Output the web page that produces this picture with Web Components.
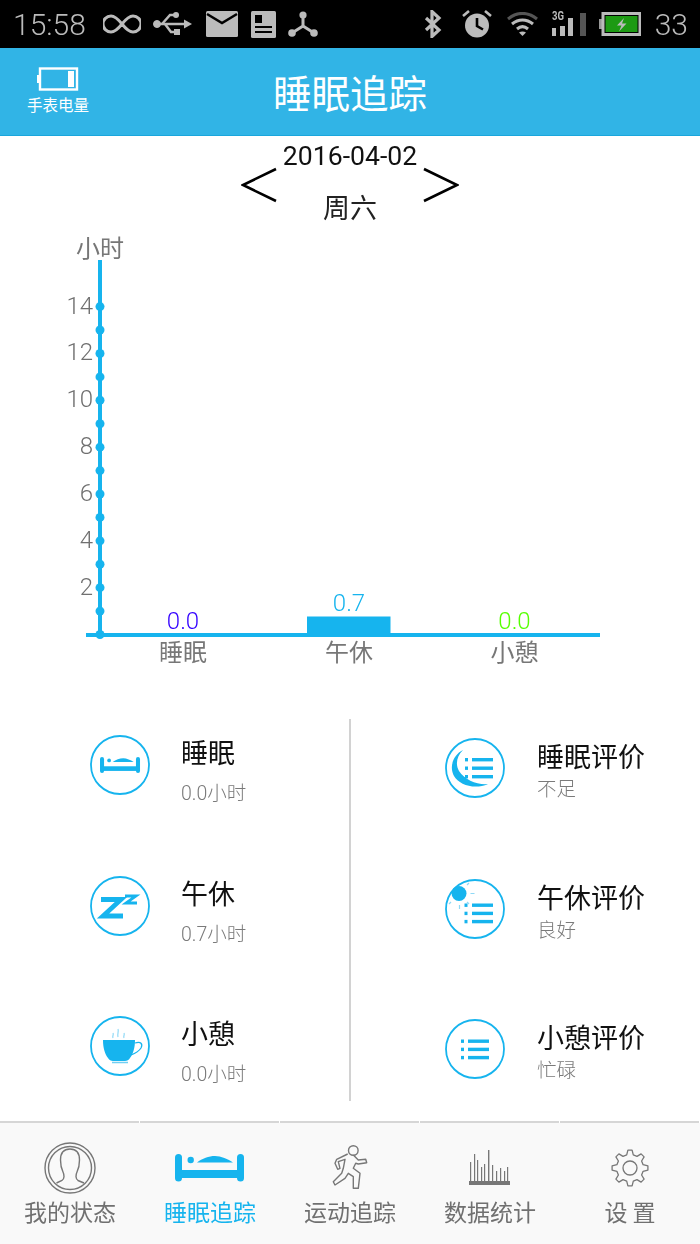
<!DOCTYPE html>
<html>
<head>
<meta charset="utf-8">
<title>睡眠追踪</title>
<style>
html, body { margin: 0; padding: 0; background: #fff; }
body { width: 700px; height: 1244px; overflow: hidden; font-family: Roboto, "Noto Sans CJK SC", sans-serif; }
</style>
</head>
<body>
<sleep-page></sleep-page>

<script>
const BLUE = '#16b4ee'
const GREY = '#777'

// every icon is viewBox-sized in reference pixels, so width/height come from here
const ICONS = {
  infinity: [38, 24, `<path d="M19 12c-4-5-7-8-11-8a8 8 0 0 0 0 16c4 0 7-3 11-8s7-8 11-8a8 8 0 0 1 0 16c-4 0-7-3-11-8z" fill="none" stroke="#bbb" stroke-width="3"/>`],
  usb: [40, 26, `<g fill="#bbb" stroke="#bbb"><circle cx="4" cy="13" r="3.5"/><path d="M4 13h30" stroke-width="2.5"/><path d="M31 8.5l8 4.5-8 4.5z" stroke="none"/><circle cx="23" cy="4" r="3" stroke="none"/><rect x="21" y="18" width="6" height="6" stroke="none"/><path d="M9 13l8-9h5M12 13l6 8h4" fill="none" stroke-width="2.5"/></g>`],
  mail: [32, 26, `<rect x="0" y="0" width="32" height="26" rx="1.5" fill="#bbb"/><path d="M1 3l15 9 15-9" fill="none" stroke="#000" stroke-width="2.6"/>`],
  doc: [25, 27, `<rect x="0" y="0" width="25" height="27" rx="1.5" fill="#bbb"/><rect x="4" y="4" width="7" height="8" fill="#000"/><rect x="4" y="15" width="17" height="2" fill="#000"/><rect x="4" y="20" width="17" height="2" fill="#000"/>`],
  nodes: [30, 26, `<g fill="#bbb"><circle cx="15" cy="4" r="3.6"/><circle cx="4" cy="22" r="3.8"/><circle cx="26" cy="22" r="3.8"/></g><path d="M15 4v11M15 15L4 22M15 15l11 7" stroke="#bbb" stroke-width="3" fill="none"/>`],
  bluetooth: [20, 28, `<path d="M3 8l13 12-7 6.5V1.5L16 8 3 20" fill="none" stroke="#bbb" stroke-width="3.2"/>`],
  alarm: [30, 28, `<circle cx="15" cy="15.5" r="12" fill="#bbb"/><path d="M15 8v8l6 3.5" fill="none" stroke="#000" stroke-width="2.6"/><path d="M1 6l6-5M29 6l-6-5" stroke="#bbb" stroke-width="2.6" fill="none"/>`],
  wifi: [31, 24, `<g fill="none" stroke-width="3"><path d="M1 7c9-7.5 20-7.5 29 0" stroke="#555"/><path d="M5 12c6.5-5.5 14.5-5.5 21 0" stroke="#bbb"/><path d="M10 17c3.5-3 7.5-3 11 0" stroke="#bbb"/></g><path d="M12 20.5c2-1.5 5-1.5 7 0l-3.5 3.5z" fill="#bbb"/>`],
  signal: [34, 28, `<g fill="#bbb"><rect x="0" y="18" width="4" height="8"/><rect x="8" y="16" width="5" height="10"/><rect x="16" y="8" width="5" height="18"/></g><rect x="28" y="3" width="6" height="23" fill="#555"/><text x="0" y="10" font-family="Roboto, sans-serif" font-size="12" font-weight="700" fill="#bbb" textLength="12" lengthAdjust="spacingAndGlyphs">3G</text>`],
  battery: [42, 24, `<rect x="0" y="7" width="3" height="10" fill="#999"/><rect x="4" y="1.5" width="37" height="21" fill="none" stroke="#bbb" stroke-width="3"/><rect x="6.5" y="4" width="32" height="16" fill="#1d9a13"/><path d="M25 6l-7 7.5h4.5l-2.5 6 7.5-8h-4.5z" fill="#bbb"/>`],
  watch: [42, 24, `<rect x="0" y="8" width="2.5" height="8" fill="#fff"/><rect x="3" y="1.5" width="37" height="21" fill="none" stroke="#fff" stroke-width="2.4"/><rect x="31" y="4" width="6" height="16" fill="#fff"/>`],
  prev: [38, 37, `<path d="M35 2L2 18l33 16" fill="none" stroke="#000" stroke-width="2.6"/>`],
  next: [38, 37, `<path d="M3 2l33 16-33 16" fill="none" stroke="#000" stroke-width="2.6"/>`],
  'c-bed': [60, 60, ring() + bed(10, 22, 0.58)],
  'c-zz': [60, 60, ring() + `<path d="M11 23.5h20L13 40h20" fill="none" stroke="${BLUE}" stroke-width="4.8"/><path d="M35 20h11L36 27h11" fill="none" stroke="${BLUE}" stroke-width="2.8"/>`],
  'c-cup': [60, 60, ring() + `<path d="M13 24h32c0 8-2 14-5 18-1 2-3 3-5 3H23c-2 0-4-1-5-3-3-4-5-10-5-18z" fill="${BLUE}"/><path d="M45 27c6-2 8 1 6 5-2 3-5 5-10 7" fill="none" stroke="${BLUE}" stroke-width="1.3"/><path d="M22 46.5h16" stroke="#6fcff3" stroke-width="1.5"/><path d="M23 22c-1-2 1-3 0-5M28 21c-1-3 1-5 0-8M34 22c-1-2 1-3 0-5" fill="none" stroke="#8fd9f6" stroke-width="1.2"/>`],
  'c-moon': [60, 60, ring() + `<path d="M18 12C8 17 4 29 9 38c5 9 21 14 34 8-11 1-23-4-29-13-4-7-2-15 4-21z" fill="${BLUE}"/>` + list(20, 27, 20, 8.5)],
  'c-sun': [60, 60, ring() + `<circle cx="14" cy="14.5" r="7.5" fill="${BLUE}"/><path d="M25.5 14.5h4M22 6l2-2M22 23l2 2M14.5 26v4M6 23l-2 2" stroke="#8fd9f6" stroke-width="1.2" fill="none"/>` + list(19.5, 27, 24.5, 8.2)],
  'c-list': [60, 60, ring() + list(16, 23, 20.5, 8.2)],
  person: [54, 54, `<g fill="none" stroke="${GREY}" stroke-width="1.4"><circle cx="27" cy="27" r="25"/><circle cx="27" cy="27" r="21.5"/><path d="M13.5 42L19 39.5C21.5 38 21.5 34 20 31 18 27 17.5 24 17.5 19 17.5 12 21 8 27 8 33 8 36.5 12 36.5 19 36.5 24 36 27 34 31 32.5 34 32.5 38 35 39.5L41 42"/></g>`],
  bed: [70, 28, bed(0, 0, 1, BLUE)],
  runner: [36, 46, `<g fill="none" stroke="${GREY}" stroke-width="1.4" stroke-linejoin="round"><circle cx="21.3" cy="5.5" r="4.8"/><path d="M15.7 9L4.7 14.3 3 18.3 5.7 24.3 8 23.3 6.3 16.7 13 14.3 11.3 23.3 9.7 28.3 1.3 36.7 3 40 13 33.3 16.3 28.3 21.3 31.7 21.3 43.3 26.3 43.3 28 28.3 21.3 23.3 23.7 18.3 26.3 19 34.7 17.7 33.7 14.3 26.3 15 21.3 10"/></g>`],
  stats: [42, 36, `<g fill="${GREY}"><rect x="0" y="31" width="41" height="4"/><rect x="1" y="12" width="1.2" height="20"/><rect x="5" y="4" width="1.2" height="28"/><rect x="8" y="10" width="1.2" height="22"/><rect x="12" y="17" width="1.2" height="15"/><rect x="15" y="14" width="1.2" height="18"/><rect x="19" y="0" width="1.4" height="32"/><rect x="23" y="15" width="1.2" height="17"/><rect x="27" y="21" width="1.2" height="11"/><rect x="31" y="18" width="1.2" height="14"/><rect x="35" y="21" width="1.2" height="11"/><rect x="38" y="17" width="1.2" height="15"/></g>`],
  gear: [38, 38, `<g fill="none" stroke="${GREY}" stroke-width="1.3" stroke-linejoin="round"><circle cx="19" cy="19" r="7"/><path d="${gearPath()}"/></g>`]
}

function ring () {
  return `<circle cx="30" cy="30" r="29" fill="none" stroke="${BLUE}" stroke-width="1.8"/>`
}

function bed (x, y, s, c = BLUE) {
  return `<g transform="translate(${x} ${y}) scale(${s})" fill="${c}"><rect x="0" y="0" width="7" height="27.5" rx="3.5"/><rect x="62" y="0" width="7" height="27.5" rx="3.5"/><rect x="2" y="16" width="65" height="8"/><circle cx="15.7" cy="6" r="3.2"/><path d="M22 8.5c5-4 12-6.5 18-6.5s13 3 18 6.5z"/></g>`
}

function list (bx, lx, top, step) {
  let out = ''
  for (let i = 0; i < 3; i++) {
    const y = top + i * step
    out += `<rect x="${bx}" y="${y}" width="3" height="3.4" fill="${BLUE}"/><rect x="${lx}" y="${y}" width="21" height="3.4" fill="${BLUE}"/>`
  }
  return out
}

function gearPath () {
  let d = ''
  const teeth = 8
  for (let i = 0; i < teeth; i++) {
    const a = (i / teeth) * Math.PI * 2
    const w = Math.PI / teeth
    const pts = [[13.5, a - w * 0.62], [18, a - w * 0.3], [18, a + w * 0.3], [13.5, a + w * 0.62]]
    pts.forEach((p, j) => {
      const px = (19 + p[0] * Math.sin(p[1])).toFixed(1)
      const py = (19 - p[0] * Math.cos(p[1])).toFixed(1)
      d += `${i === 0 && j === 0 ? 'M' : 'L'}${px} ${py}`
    })
  }
  return d + 'Z'
}

class AppIcon extends HTMLElement {
  connectedCallback () {
    const [w, h, body] = ICONS[this.getAttribute('name')]
    this.attachShadow({ mode: 'open' }).innerHTML = `
      <style>:host { display: block; flex: none; width: ${w}px; height: ${h}px; } svg { display: block; }</style>
      <svg width="${w}" height="${h}" viewBox="0 0 ${w} ${h}">${body}</svg>`
  }
}

class StatusBar extends HTMLElement {
  connectedCallback () {
    this.attachShadow({ mode: 'open' }).innerHTML = `
      <style>
        :host { display: flex; align-items: center; height: 48px; background: #000; color: #bbb; padding: 0 12px 0 13px; font: 300 30px Roboto, sans-serif; }
        .push { flex: 1; }
      </style>
      <span>15:58</span>
      <app-icon name="infinity" style="margin-left:17px"></app-icon>
      <app-icon name="usb" style="margin-left:12px"></app-icon>
      <app-icon name="mail" style="margin-left:13px"></app-icon>
      <app-icon name="doc" style="margin-left:13px"></app-icon>
      <app-icon name="nodes" style="margin-left:12px"></app-icon>
      <div class="push"></div>
      <app-icon name="bluetooth"></app-icon>
      <app-icon name="alarm" style="margin-left:19px"></app-icon>
      <app-icon name="wifi" style="margin-left:15px"></app-icon>
      <app-icon name="signal" style="margin-left:14px"></app-icon>
      <app-icon name="battery" style="margin-left:13px"></app-icon>
      <span style="margin-left:14px">33</span>`
  }
}

class TitleBar extends HTMLElement {
  connectedCallback () {
    this.attachShadow({ mode: 'open' }).innerHTML = `
      <style>
        :host { display: flex; position: relative; align-items: center; justify-content: center; height: 87px; background: #31b4e6; border-bottom: 1px solid #1aa6dc; color: #fff; font-family: "Noto Sans CJK SC", sans-serif; }
        .title { font-size: 38.5px; line-height: 1; }
        .watch { position: absolute; left: 27px; top: 19px; display: flex; flex-direction: column; align-items: center; gap: 3px; font-size: 15.5px; line-height: 20px; }
      </style>
      <div class="watch"><app-icon name="watch"></app-icon><span>手表电量</span></div>
      <div class="title"><slot></slot></div>`
  }
}

class DateNav extends HTMLElement {
  connectedCallback () {
    this.attachShadow({ mode: 'open' }).innerHTML = `
      <style>
        :host { display: flex; justify-content: center; align-items: flex-start; height: 86px; color: #000; }
        .mid { width: 142px; text-align: center; padding-top: 1px; }
        .date { font: 26.6px/38px Roboto, sans-serif; white-space: nowrap; color: #111; }
        .day { font: 27px/36px "Noto Sans CJK SC", sans-serif; margin-top: 14px; color: #222; }
        app-icon { margin-top: 31px; }
      </style>
      <app-icon name="prev"></app-icon>
      <div class="mid"><div class="date"><slot name="date"></slot></div><div class="day"><slot name="day"></slot></div></div>
      <app-icon name="next"></app-icon>`
  }
}

// chart coordinates are the page's own pixels, hence the offset viewBox
class SleepChart extends HTMLElement {
  connectedCallback () {
    const zero = 634.5
    const step = 23.42
    let ticks = ''
    for (let i = 0; i <= 14; i++) {
      const y = zero - i * step
      ticks += `<circle cx="100" cy="${y}" r="4.5" fill="${BLUE}"/>`
      if (i && i % 2 === 0) ticks += `<text x="93" y="${y + 7}" text-anchor="end" class="num" fill="#707070">${i}</text>`
    }
    const cols = [
      { x: 183, label: '睡眠', value: '0.0', color: '#3300ff', h: 0 },
      { x: 349, label: '午休', value: '0.7', color: BLUE, h: 18 },
      { x: 514.5, label: '小憩', value: '0.0', color: '#55ff00', h: 0 }
    ]
    const bars = cols.map(c => `
      ${c.h ? `<rect x="${c.x - 42}" y="${zero - c.h}" width="83.5" height="${c.h}" fill="${BLUE}"/>` : ''}
      <text x="${c.x}" y="${zero - c.h - 5.5}" text-anchor="middle" class="num" fill="${c.color}">${c.value}</text>
      <text x="${c.x}" y="661" text-anchor="middle" class="cjk" fill="${GREY}">${c.label}</text>`).join('')
    this.attachShadow({ mode: 'open' }).innerHTML = `
      <style>
        :host { display: block; height: 497px; }
        svg { display: block; }
        .num { font: 300 24px Roboto, sans-serif; }
        .cjk { font: 24px "Noto Sans CJK SC", sans-serif; }
      </style>
      <svg width="700" height="497" viewBox="0 222 700 497">
        <text x="100" y="257" text-anchor="middle" class="cjk" fill="${GREY}">小时</text>
        <rect x="98" y="260" width="4" height="375" fill="${BLUE}"/>
        <rect x="86" y="633" width="514" height="4" fill="${BLUE}"/>
        ${ticks}${bars}
      </svg>`
  }
}

class StatItem extends HTMLElement {
  connectedCallback () {
    this.attachShadow({ mode: 'open' }).innerHTML = `
      <style>
        :host { display: flex; align-items: flex-start; gap: var(--icon-gap); padding: var(--item-top) 0 0 var(--item-left); height: 140.5px; box-sizing: border-box; }
        .text { margin-top: var(--text-top); }
        .name { font: 27px/36px "Noto Sans CJK SC", sans-serif; color: #111; white-space: nowrap; }
        .sub { font: 300 19.5px/28px Roboto, "Noto Sans CJK SC", sans-serif; color: #7a7a7a; margin-top: var(--sub-gap); white-space: nowrap; }
      </style>
      <app-icon name="${this.getAttribute('icon')}"></app-icon>
      <div class="text"><div class="name"><slot name="name"></slot></div><div class="sub"><slot name="sub"></slot></div></div>`
  }
}

class StatGrid extends HTMLElement {
  connectedCallback () {
    this.attachShadow({ mode: 'open' }).innerHTML = `
      <style>
        :host { display: grid; grid-template-columns: 349px 2px 349px; grid-template-rows: 382px; margin-bottom: 20px; }
        .left { --item-top: 16px; --item-left: 90px; --icon-gap: 31px; --text-top: -1px; --sub-gap: 10px; }
        .right { --item-top: 19px; --item-left: 94px; --icon-gap: 32px; --text-top: 0px; --sub-gap: 2px; }
        .rule { background: #d2d2d2; }
      </style>
      <div class="left"><slot name="left"></slot></div>
      <div class="rule"></div>
      <div class="right"><slot name="right"></slot></div>`
  }
}

class TabItem extends HTMLElement {
  connectedCallback () {
    const active = this.hasAttribute('active')
    this.attachShadow({ mode: 'open' }).innerHTML = `
      <style>
        :host { flex: 0 0 140px; display: flex; flex-direction: column; align-items: center; border-top: 2px solid #d6d6d6; color: ${active ? BLUE : '#707070'}; font: 23px/30px "Noto Sans CJK SC", sans-serif; position: relative; }
        :host::before { content: ""; position: absolute; left: 139px; top: -2px; width: 1px; height: 2px; background: #fff; }
        .ic { height: 73px; padding-top: 17px; box-sizing: border-box; display: flex; align-items: center; justify-content: center; width: 100%; }
        .label { white-space: nowrap; }
      </style>
      <div class="ic"><app-icon name="${this.getAttribute('icon')}"></app-icon></div>
      <div class="label"><slot></slot></div>`
  }
}

class TabBar extends HTMLElement {
  connectedCallback () {
    this.attachShadow({ mode: 'open' }).innerHTML = `
      <style>:host { display: flex; height: 123px; box-sizing: border-box; background: #f9f9f9; }</style>
      <slot></slot>`
  }
}

class SleepPage extends HTMLElement {
  connectedCallback () {
    this.attachShadow({ mode: 'open' }).innerHTML = `
      <style>:host { display: block; width: 700px; height: 1244px; overflow: hidden; will-change: opacity; }</style>
      <status-bar></status-bar>
      <title-bar>睡眠追踪</title-bar>
      <date-nav><span slot="date">2016-04-02</span><span slot="day">周六</span></date-nav>
      <sleep-chart></sleep-chart>
      <stat-grid>
        <stat-item slot="left" icon="c-bed"><span slot="name">睡眠</span><span slot="sub">0.0小时</span></stat-item>
        <stat-item slot="left" icon="c-zz"><span slot="name">午休</span><span slot="sub">0.7小时</span></stat-item>
        <stat-item slot="left" icon="c-cup"><span slot="name">小憩</span><span slot="sub">0.0小时</span></stat-item>
        <stat-item slot="right" icon="c-moon"><span slot="name">睡眠评价</span><span slot="sub">不足</span></stat-item>
        <stat-item slot="right" icon="c-sun"><span slot="name">午休评价</span><span slot="sub">良好</span></stat-item>
        <stat-item slot="right" icon="c-list"><span slot="name">小憩评价</span><span slot="sub">忙碌</span></stat-item>
      </stat-grid>
      <tab-bar>
        <tab-item icon="person">我的状态</tab-item>
        <tab-item icon="bed" active>睡眠追踪</tab-item>
        <tab-item icon="runner">运动追踪</tab-item>
        <tab-item icon="stats">数据统计</tab-item>
        <tab-item icon="gear">设 置</tab-item>
      </tab-bar>`
  }
}

customElements.define('app-icon', AppIcon)
customElements.define('status-bar', StatusBar)
customElements.define('title-bar', TitleBar)
customElements.define('date-nav', DateNav)
customElements.define('sleep-chart', SleepChart)
customElements.define('stat-item', StatItem)
customElements.define('stat-grid', StatGrid)
customElements.define('tab-item', TabItem)
customElements.define('tab-bar', TabBar)
customElements.define('sleep-page', SleepPage)
</script>
</body>
</html>
